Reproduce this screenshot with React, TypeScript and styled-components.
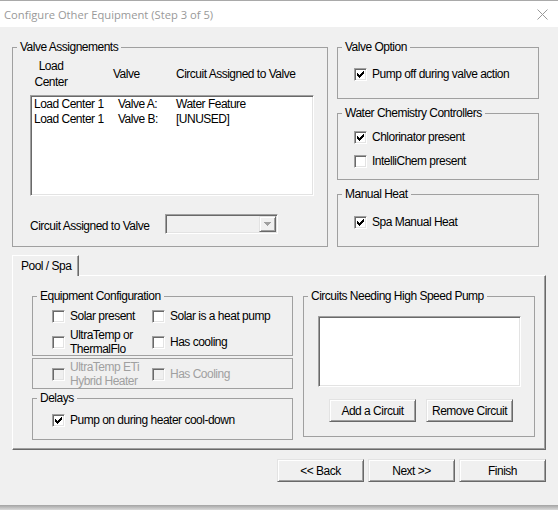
import React from "react";
import styled, { createGlobalStyle } from "styled-components";

const FONT = `"Liberation Sans", Arial, sans-serif`;

const GlobalStyle = createGlobalStyle`
  html, body { margin: 0; padding: 0; background: #f0f0f0; }
  * { box-sizing: border-box; }
`;

const Window = styled.div`
  width: 558px;
  height: 510px;
  display: flex;
  flex-direction: column;
  background: #f0f0f0;
  font-family: ${FONT};
  font-size: 12px;
  letter-spacing: -0.5px;
  color: #000;
  overflow: hidden;
`;

const TitleBar = styled.div`
  height: 27px;
  flex: none;
  border-top: 1px solid #a9a9a9;
  background: #fff;
  display: flex;
  align-items: center;
  justify-content: space-between;
  padding: 0 10px 0 4px;
`;

const TitleText = styled.span`
  font-family: "Open Sans", "Liberation Sans", sans-serif;
  font-size: 11.2px;
  letter-spacing: 0;
  color: #999;
`;

const Body = styled.div`
  flex: 1;
  display: flex;
  flex-direction: column;
  padding: 13px 0 0 12px;
`;

const BottomEdge = styled.div`
  height: 5px;
  flex: none;
  background: linear-gradient(#a3a3a3, #dadada);
`;

const TopRow = styled.div`
  display: flex;
  gap: 9px;
  height: 207px;
`;

const Column = styled.div<{ $gap: number; $w: number }>`
  display: flex;
  flex-direction: column;
  gap: ${(p) => p.$gap}px;
  width: ${(p) => p.$w}px;
  flex: none;
`;

const GroupBox = styled.fieldset<{ $w?: number; $h: number }>`
  margin: 0;
  padding: 0;
  min-width: 0;
  width: ${(p) => (p.$w ? `${p.$w}px` : "auto")};
  height: ${(p) => p.$h}px;
  flex: none;
  border: 1px solid #a0a0a0;
`;

const Legend = styled.legend`
  margin-left: 4px;
  padding: 0 3px;
  line-height: 14px;
  height: 14px;
  white-space: nowrap;
`;

const GroupContent = styled.div<{ $pad: string }>`
  padding: ${(p) => p.$pad};
  display: flex;
  flex-direction: column;
`;

const HeaderRow = styled.div`
  display: grid;
  grid-template-columns: 42px 104px 1fr;
  align-items: center;
  height: 32px;
  line-height: 16px;
`;

const HeaderCell = styled.div<{ $center?: boolean; $indent?: number }>`
  text-align: ${(p) => (p.$center ? "center" : "left")};
  padding-left: ${(p) => p.$indent ?? 0}px;
  padding-top: 2px;
  white-space: nowrap;
`;

const ListBox = styled.div<{ $w?: number; $h: number; $mt: number }>`
  width: ${(p) => (p.$w ? `${p.$w}px` : "100%")};
  height: ${(p) => p.$h}px;
  margin-top: ${(p) => p.$mt}px;
  background: #fff;
  border: 1px solid;
  border-color: #a0a0a0 #fff #fff #a0a0a0;
  box-shadow: inset 1px 1px 0 #696969, inset -1px -1px 0 #e3e3e3;
  padding: 1px 3px;
  flex: none;
`;

const ListRow = styled.div`
  display: grid;
  grid-template-columns: 84px 58px 1fr;
  line-height: 14.5px;
  white-space: nowrap;
`;

const ComboRow = styled.div`
  display: flex;
  align-items: center;
  margin-top: 18px;
  height: 20px;
`;

const FieldLabel = styled.span`
  width: 135px;
  padding-top: 4px;
  white-space: nowrap;
`;

const Combo = styled.div`
  width: 113px;
  height: 20px;
  background: #f0f0f0;
  border: 1px solid;
  border-color: #a0a0a0 #fff #fff #a0a0a0;
  box-shadow: inset 1px 1px 0 #696969, inset -1px -1px 0 #e3e3e3;
  padding: 1px;
  display: flex;
  justify-content: flex-end;
`;

const ComboArrow = styled.span`
  width: 17px;
  height: 16px;
  border: 1px solid;
  border-color: #e3e3e3 #696969 #696969 #e3e3e3;
  box-shadow: inset 1px 1px 0 #fff, inset -1px -1px 0 #a0a0a0;
  display: flex;
  align-items: center;
  justify-content: center;
`;

const CheckList = styled.div<{ $gap: number }>`
  display: flex;
  flex-direction: column;
  gap: ${(p) => p.$gap}px;
`;

const CheckGrid = styled.div`
  display: grid;
  grid-template-columns: 100px 1fr;
  row-gap: 5px;
  align-items: center;
`;

const CheckItem = styled.label<{ $disabled?: boolean }>`
  display: flex;
  align-items: center;
  gap: 5px;
  line-height: 14px;
  color: ${(p) => (p.$disabled ? "#a0a0a0" : "#000")};
  white-space: nowrap;
`;

const Box = styled.span<{ $disabled?: boolean }>`
  width: 13px;
  height: 13px;
  flex: none;
  display: inline-flex;
  align-items: center;
  justify-content: center;
  border: 1px solid;
  border-color: #a0a0a0 #fff #fff #a0a0a0;
  box-shadow: inset 1px 1px 0 #696969, inset -1px -1px 0 #e3e3e3;
  background: ${(p) => (p.$disabled ? "#f0f0f0" : "#fff")};
`;

const TabStrip = styled.div`
  display: flex;
  margin-top: 8px;
  position: relative;
  z-index: 1;
`;

const Tab = styled.div`
  width: 67px;
  height: 21px;
  margin-bottom: -1px;
  background: #f0f0f0;
  border-left: 1px solid #fff;
  border-top: 1px solid #fff;
  border-right: 1px solid #696969;
  box-shadow: inset -1px 0 0 #a0a0a0;
  padding: 0 0 1px 8px;
  display: flex;
  align-items: center;
  line-height: 14px;
  white-space: nowrap;
`;

const TabPanel = styled.div`
  width: 534px;
  height: 175px;
  border: 1px solid;
  border-color: #fff #696969 #696969 #fff;
  box-shadow: inset -1px -1px 0 #a0a0a0;
  display: flex;
  gap: 10px;
  padding: 13px 0 0 19px;
`;

const ButtonRow = styled.div<{ $gap: number; $mt: number; $pl?: number; $pr?: number; $end?: boolean }>`
  display: flex;
  gap: ${(p) => p.$gap}px;
  margin-top: ${(p) => p.$mt}px;
  padding-left: ${(p) => p.$pl ?? 0}px;
  padding-right: ${(p) => p.$pr ?? 0}px;
  justify-content: ${(p) => (p.$end ? "flex-end" : "flex-start")};
`;

const Button = styled.button`
  width: 87px;
  height: 23px;
  padding: 0;
  font: inherit;
  letter-spacing: inherit;
  color: #000;
  background: #f0f0f0;
  border: 1px solid;
  border-color: #e3e3e3 #696969 #696969 #e3e3e3;
  box-shadow: inset 1px 1px 0 #fff, inset -1px -1px 0 #a0a0a0;
  white-space: nowrap;
`;

const CheckMark = ({ color }: { color: string }) => (
  <svg width="7" height="7" viewBox="0 0 7 7" shapeRendering="crispEdges">
    <path
      fill={color}
      d="M0 2h1v3h-1z M1 3h1v3h-1z M2 4h1v3h-1z M3 3h1v3h-1z M4 2h1v3h-1z M5 1h1v3h-1z M6 0h1v3h-1z"
    />
  </svg>
);

const DownArrow = () => (
  <svg width="7" height="4" viewBox="0 0 7 4" shapeRendering="crispEdges">
    <path fill="#a0a0a0" d="M0 0h7v1h-7z M1 1h5v1h-5z M2 2h3v1h-3z M3 3h1v1h-1z" />
  </svg>
);

const CloseIcon = () => (
  <svg width="11" height="11" viewBox="0 0 11 11">
    <path d="M0.5 0.5 L10.5 10.5 M10.5 0.5 L0.5 10.5" stroke="#999" strokeWidth="1" fill="none" />
  </svg>
);

const Check = ({
  checked,
  disabled,
  children,
}: {
  checked?: boolean;
  disabled?: boolean;
  children: React.ReactNode;
}) => (
  <CheckItem $disabled={disabled}>
    <Box $disabled={disabled}>{checked && <CheckMark color={disabled ? "#a0a0a0" : "#000"} />}</Box>
    <span>{children}</span>
  </CheckItem>
);

const valves = [
  { lc: "Load Center 1", valve: "Valve A:", circuit: "Water Feature" },
  { lc: "Load Center 1", valve: "Valve B:", circuit: "[UNUSED]" },
];

export default function App() {
  return (
    <>
      <GlobalStyle />
      <Window>
        <TitleBar>
          <TitleText>Configure Other Equipment (Step 3 of 5)</TitleText>
          <CloseIcon />
        </TitleBar>
        <Body>
          <TopRow>
            <GroupBox $w={316} $h={207}>
              <Legend>Valve Assignements</Legend>
              <GroupContent $pad="2px 13px 0 17px">
                <HeaderRow>
                  <HeaderCell $center>
                    Load
                    <br />
                    Center
                  </HeaderCell>
                  <HeaderCell $indent={41}>Valve</HeaderCell>
                  <HeaderCell>Circuit Assigned to Valve</HeaderCell>
                </HeaderRow>
                <ListBox $h={101} $mt={7}>
                  {valves.map((v) => (
                    <ListRow key={v.valve}>
                      <span>{v.lc}</span>
                      <span>{v.valve}</span>
                      <span>{v.circuit}</span>
                    </ListRow>
                  ))}
                </ListBox>
                <ComboRow>
                  <FieldLabel>Circuit Assigned to Valve</FieldLabel>
                  <Combo>
                    <ComboArrow>
                      <DownArrow />
                    </ComboArrow>
                  </Combo>
                </ComboRow>
              </GroupContent>
            </GroupBox>
            <Column $gap={7} $w={202}>
              <GroupBox $h={59}>
                <Legend>Valve Option</Legend>
                <GroupContent $pad="13px 0 0 16px">
                  <Check checked>Pump off during valve action</Check>
                </GroupContent>
              </GroupBox>
              <GroupBox $h={74}>
                <Legend>Water Chemistry Controllers</Legend>
                <GroupContent $pad="10px 0 0 16px">
                  <CheckList $gap={10}>
                    <Check checked>Chlorinator present</Check>
                    <Check>IntelliChem present</Check>
                  </CheckList>
                </GroupContent>
              </GroupBox>
              <GroupBox $h={60}>
                <Legend>Manual Heat</Legend>
                <GroupContent $pad="14px 0 0 16px">
                  <Check checked>Spa Manual Heat</Check>
                </GroupContent>
              </GroupBox>
            </Column>
          </TopRow>

          <TabStrip>
            <Tab>Pool / Spa</Tab>
          </TabStrip>
          <TabPanel>
            <Column $gap={2} $w={261}>
              <GroupBox $h={67}>
                <Legend>Equipment Configuration</Legend>
                <GroupContent $pad="6px 0 0 19px">
                  <CheckGrid>
                    <Check>Solar present</Check>
                    <Check>Solar is a heat pump</Check>
                    <Check>
                      UltraTemp or
                      <br />
                      ThermalFlo
                    </Check>
                    <Check>Has cooling</Check>
                  </CheckGrid>
                </GroupContent>
              </GroupBox>
              <GroupBox $h={31}>
                <GroupContent $pad="1px 0 0 19px">
                  <CheckGrid>
                    <Check disabled>
                      UltraTemp ETi
                      <br />
                      Hybrid Heater
                    </Check>
                    <Check disabled>Has Cooling</Check>
                  </CheckGrid>
                </GroupContent>
              </GroupBox>
              <GroupBox $h={49}>
                <Legend>Delays</Legend>
                <GroupContent $pad="8px 0 0 19px">
                  <Check checked>Pump on during heater cool-down</Check>
                </GroupContent>
              </GroupBox>
            </Column>
            <GroupBox $w={232} $h={148}>
              <Legend>Circuits Needing High Speed Pump</Legend>
              <GroupContent $pad="13px 0 0 14px">
                <ListBox $w={203} $h={71} $mt={0} />
                <ButtonRow $gap={10} $mt={12} $pl={11}>
                  <Button>Add a Circuit</Button>
                  <Button>Remove Circuit</Button>
                </ButtonRow>
              </GroupContent>
            </GroupBox>
          </TabPanel>

          <ButtonRow $gap={4} $mt={9} $pr={12} $end>
            <Button>&lt;&lt; Back</Button>
            <Button>Next &gt;&gt;</Button>
            <Button>Finish</Button>
          </ButtonRow>
        </Body>
        <BottomEdge />
      </Window>
    </>
  );
}
